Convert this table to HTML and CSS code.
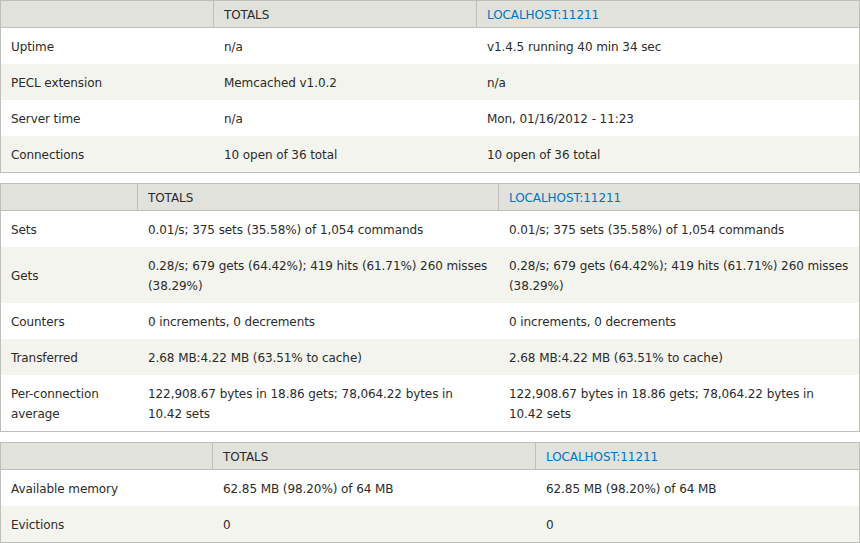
FILE: index.html
```html
<!DOCTYPE html>
<html>
<head>
<meta charset="utf-8">
<link rel="stylesheet" href="styles.css">
</head>
<body>
<table class="stats t1">
  <colgroup><col class="c1"><col class="c2"><col class="c3"></colgroup>
  <thead>
    <tr><th></th><th>Totals</th><th><a href="#">localhost:11211</a></th></tr>
  </thead>
  <tbody>
    <tr><td>Uptime</td><td>n/a</td><td>v1.4.5 running 40 min 34 sec</td></tr>
    <tr><td>PECL extension</td><td>Memcached v1.0.2</td><td>n/a</td></tr>
    <tr><td>Server time</td><td>n/a</td><td>Mon, 01/16/2012 - 11:23</td></tr>
    <tr><td>Connections</td><td>10 open of 36 total</td><td>10 open of 36 total</td></tr>
  </tbody>
</table>

<table class="stats t2">
  <colgroup><col class="c1"><col class="c2"><col class="c3"></colgroup>
  <thead>
    <tr><th></th><th>Totals</th><th><a href="#">localhost:11211</a></th></tr>
  </thead>
  <tbody>
    <tr><td>Sets</td><td>0.01/s; 375 sets (35.58%) of 1,054 commands</td><td>0.01/s; 375 sets (35.58%) of 1,054 commands</td></tr>
    <tr><td>Gets</td><td>0.28/s; 679 gets (64.42%); 419 hits (61.71%) 260 misses (38.29%)</td><td>0.28/s; 679 gets (64.42%); 419 hits (61.71%) 260 misses (38.29%)</td></tr>
    <tr><td>Counters</td><td>0 increments, 0 decrements</td><td>0 increments, 0 decrements</td></tr>
    <tr><td>Transferred</td><td>2.68 MB:4.22 MB (63.51% to cache)</td><td>2.68 MB:4.22 MB (63.51% to cache)</td></tr>
    <tr><td>Per-connection average</td><td>122,908.67 bytes in 18.86 gets; 78,064.22 bytes in 10.42 sets</td><td>122,908.67 bytes in 18.86 gets; 78,064.22 bytes in 10.42 sets</td></tr>
  </tbody>
</table>

<table class="stats t3">
  <colgroup><col class="c1"><col class="c2"><col class="c3"></colgroup>
  <thead>
    <tr><th></th><th>Totals</th><th><a href="#">localhost:11211</a></th></tr>
  </thead>
  <tbody>
    <tr><td>Available memory</td><td>62.85 MB (98.20%) of 64 MB</td><td>62.85 MB (98.20%) of 64 MB</td></tr>
    <tr><td>Evictions</td><td>0</td><td>0</td></tr>
  </tbody>
</table>
</body>
</html>
```

FILE: styles.css
```css
html, body {
  margin: 0;
  padding: 0;
  background: #fff;
}

body {
  font-family: "DejaVu Sans", Verdana, sans-serif;
  font-size: 12px;
  line-height: 20px;
  letter-spacing: -0.08px;
  color: #2b2b2b;
}

.stats {
  width: 860px;
  table-layout: fixed;
  border-collapse: separate;
  border-spacing: 0;
  border: 1px solid #bebfb9;
  margin: 0 0 10px 0;
}

.stats:last-child {
  margin-bottom: 0;
}

.stats th {
  background: #e1e2dc;
  font-weight: normal;
  text-transform: uppercase;
  text-align: left;
  padding: 4px 10px 2px 10px;
  border-bottom: 1px solid #bebfb9;
  color: #2b2b2b;
}

.stats th + th {
  border-left: 1px solid #bebfb9;
}

.stats th a {
  color: #0074bd;
  text-decoration: none;
}

.stats td {
  padding: 9px 10px 7px 10px;
  vertical-align: middle;
  text-align: left;
}

.stats td + td {
  border-left: 1px solid transparent;
}

.stats tbody tr:nth-child(even) td {
  background: #f3f4ee;
}

.t1 .c1 { width: 212px; }
.t1 .c2 { width: 263px; }
.t1 .c3 { width: 383px; }

.t2 .c1 { width: 136px; }
.t2 .c2 { width: 361px; }
.t2 .c3 { width: 361px; }

.t3 .c1 { width: 211px; }
.t3 .c2 { width: 323px; }
.t3 .c3 { width: 324px; }
```
